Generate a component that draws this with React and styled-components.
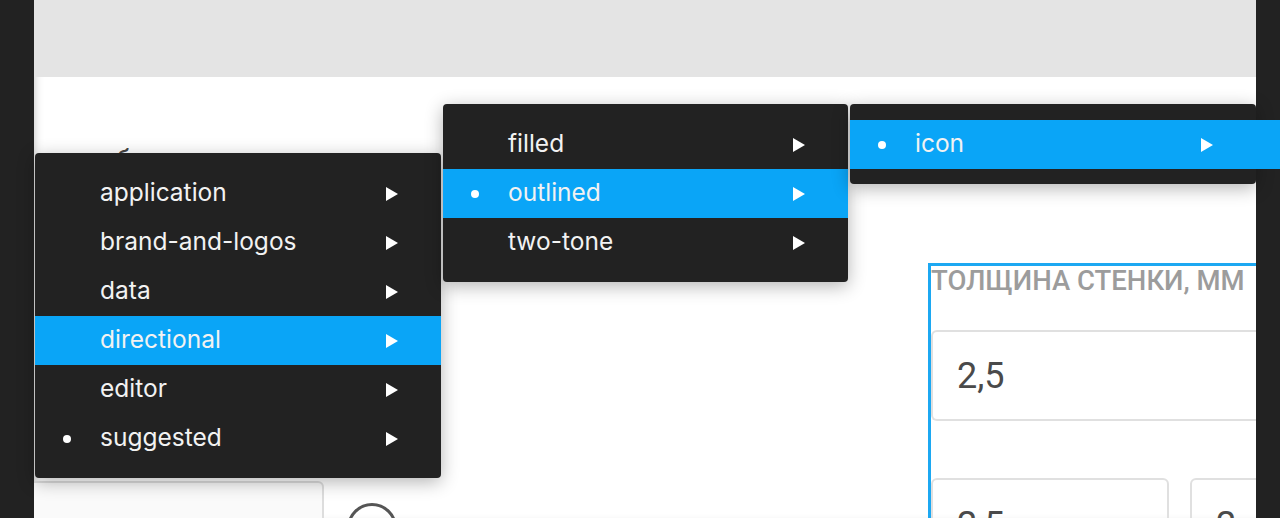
import React from "react";
import styled, { createGlobalStyle } from "styled-components";

const GlobalStyle = createGlobalStyle`
  html, body {
    margin: 0;
    padding: 0;
    background: #222;
    overflow: hidden;
  }
  * { box-sizing: border-box; }
`;

const menus = [
  {
    left: 35,
    top: 153,
    width: 406,
    items: [
      { label: "application" },
      { label: "brand-and-logos" },
      { label: "data" },
      { label: "directional", active: true },
      { label: "editor" },
      { label: "suggested", dot: true },
    ],
  },
  {
    left: 443,
    top: 104,
    width: 405,
    items: [
      { label: "filled" },
      { label: "outlined", active: true, dot: true },
      { label: "two-tone" },
    ],
  },
  {
    left: 850,
    top: 104,
    width: 406,
    items: [{ label: "icon", active: true, dot: true, bleed: true }],
  },
];

const Arrow = () => (
  <svg width="12" height="14" viewBox="0 0 12 14">
    <path d="M0 0 L12 7 L0 14 Z" fill="#fff" />
  </svg>
);

const App = () => {
  return (
    <>
      <GlobalStyle />
      <Frame>
        <Rail />
        <Main>
          <Header />
          <Body>
            <LeftCol>
              <HiddenLabel>борт изделия, мм</HiddenLabel>
              <BottomRow>
                <Input width={290} />
                <RoundBtn />
              </BottomRow>
            </LeftCol>
            <Field>
              <FieldLabel>Толщина стенки, мм</FieldLabel>
              <BigInput>2,5</BigInput>
              <InputRow>
                <SmallInput>2,5</SmallInput>
                <SmallInput>2</SmallInput>
              </InputRow>
            </Field>
          </Body>
        </Main>
        <Rail narrow />
      </Frame>

      {menus.map((m, i) => (
        <Menu key={i} style={{ left: m.left, top: m.top, width: m.width }}>
          {m.items.map((it) => (
            <Item key={it.label} active={it.active} bleed={it.bleed}>
              <Dot>{it.dot && <DotMark />}</Dot>
              <Label>{it.label}</Label>
              <Arrow />
            </Item>
          ))}
        </Menu>
      ))}
    </>
  );
};

export default App;

const Frame = styled.div`
  display: flex;
  width: 1280px;
  height: 518px;
  overflow: hidden;
`;

const Rail = styled.div`
  width: ${(p) => (p.narrow ? "24px" : "34px")};
  flex-shrink: 0;
  background: #222;
`;

const Main = styled.div`
  flex: 1;
  min-width: 0;
  overflow: hidden;
  display: flex;
  flex-direction: column;
  background: #fff;
  box-shadow: inset 6px 0 10px -6px rgba(0, 0, 0, 0.25);
`;

const Header = styled.div`
  height: 77px;
  background: #e4e4e4;
  flex-shrink: 0;
`;

const Body = styled.div`
  flex: 1;
  display: flex;
  overflow: hidden;
`;

const LeftCol = styled.div`
  width: 894px;
  flex-shrink: 0;
  display: flex;
  flex-direction: column;
  padding-top: 67px;
`;

const HiddenLabel = styled.div`
  font-family: Roboto, "Liberation Sans", sans-serif;
  font-size: 26px;
  line-height: 30px;
  color: #444;
  padding-left: 82px;
  height: 30px;
  flex-shrink: 0;
`;

const BottomRow = styled.div`
  margin-top: 307px;
  display: flex;
  align-items: flex-start;
  gap: 23px;
  flex-shrink: 0;
`;

const Input = styled.div`
  width: ${(p) => p.width}px;
  height: 90px;
  border: 2px solid #ddd;
  border-left: none;
  border-radius: 0 6px 6px 0;
  background: #fafafa;
`;

const RoundBtn = styled.div`
  width: 50px;
  height: 50px;
  margin-top: 22px;
  border-radius: 50%;
  border: 3px solid #555;
`;

const Field = styled.div`
  flex: 1;
  margin-top: 186px;
  border-left: 3px solid #1ca8f2;
  border-top: 3px solid #1ca8f2;
  display: flex;
  flex-direction: column;
  min-width: 0;
`;

const FieldLabel = styled.div`
  font-family: Roboto, "Liberation Sans", sans-serif;
  font-weight: 500;
  font-size: 27.5px;
  line-height: 30px;
  text-transform: uppercase;
  color: #9c9c9c;
  white-space: nowrap;
  flex-shrink: 0;
`;

const BigInput = styled.div`
  margin-top: 34px;
  height: 91px;
  flex-shrink: 0;
  border: 2px solid #e0e0e0;
  border-right: none;
  border-radius: 6px 0 0 6px;
  padding-left: 24px;
  display: flex;
  align-items: center;
  font-family: Roboto, "Liberation Sans", sans-serif;
  font-size: 36px;
  color: #4a4a4a;
`;

const InputRow = styled.div`
  margin-top: 57px;
  display: flex;
  gap: 21px;
  flex-shrink: 0;
`;

const SmallInput = styled.div`
  width: 238px;
  flex-shrink: 0;
  height: 80px;
  border: 2px solid #e0e0e0;
  border-radius: 6px;
  padding: 24px 0 0 24px;
  font-family: Roboto, "Liberation Sans", sans-serif;
  font-size: 36px;
  color: #4a4a4a;
`;

const Menu = styled.div`
  position: absolute;
  background: #222;
  border-radius: 4px;
  padding: 16px 0 15px;
  box-shadow: 0 4px 18px rgba(0, 0, 0, 0.3);
`;

const Item = styled.div`
  height: 49px;
  display: flex;
  align-items: center;
  padding-right: 43px;
  width: ${(p) => (p.bleed ? "calc(100% + 24px)" : "100%")};
  background: ${(p) => (p.active ? "#0aa5f7" : "transparent")};
  font-family: Inter, "Liberation Sans", sans-serif;
  font-size: 24.5px;
  color: #f2f2f2;
  ${(p) => p.bleed && "padding-right: 67px;"}
`;

const Dot = styled.div`
  width: 65px;
  flex-shrink: 0;
  display: flex;
  padding-left: 28px;
`;

const DotMark = styled.span`
  width: 8px;
  height: 8px;
  border-radius: 50%;
  background: #fff;
`;

const Label = styled.span`
  flex: 1;
  line-height: 1;
  padding-bottom: 2px;
`;
